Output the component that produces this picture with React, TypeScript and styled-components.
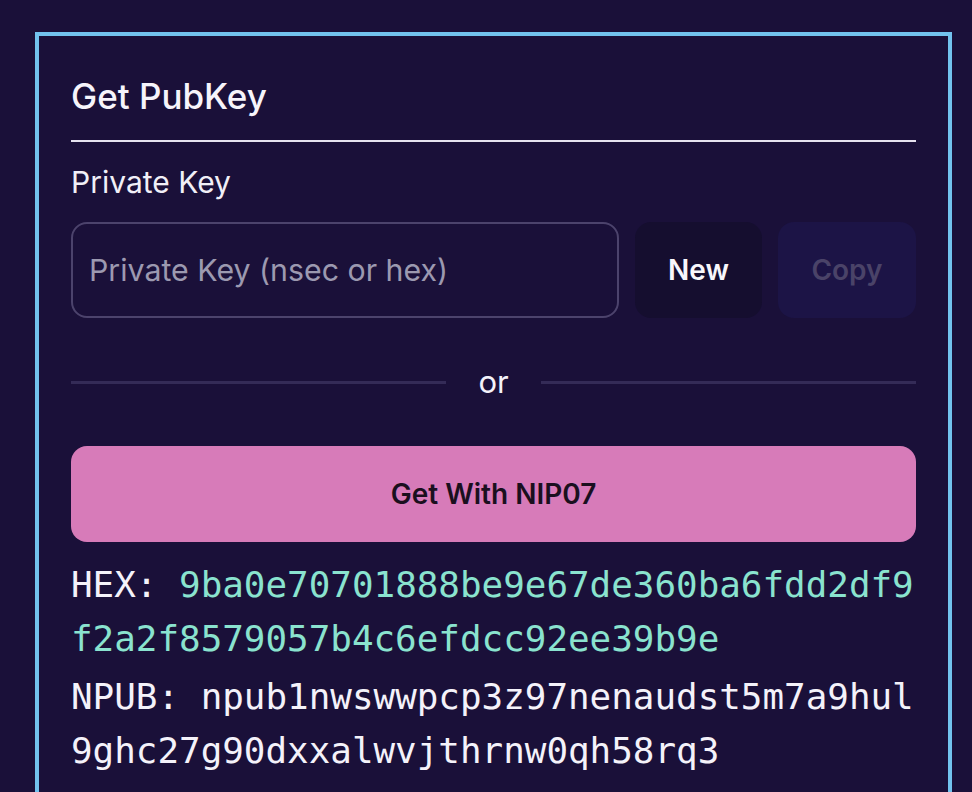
import React from "react";
import styled, { createGlobalStyle } from "styled-components";

const GlobalStyle = createGlobalStyle`
  html, body {
    margin: 0;
    padding: 0;
    background: #1a1039;
    font-family: Inter, "Noto Sans", sans-serif;
    color: #f4f2fa;
  }
  * { box-sizing: border-box; }
`;

const Page = styled.div`
  min-height: 792px;
  padding: 32px 20px 0 35px;
`;

const Card = styled.section`
  width: 917px;
  border: 4px solid #72c2ee;
  border-bottom: none;
  padding: 32px 32px 40px;
  display: flex;
  flex-direction: column;
`;

const Title = styled.h2`
  margin: 0;
  font-size: 35px;
  line-height: 56px;
  font-weight: 500;
  color: #f6f4fb;
`;

const Rule = styled.hr`
  margin: 16px 0 0;
  border: none;
  height: 2px;
  background: #e6e2ef;
`;

const Label = styled.label`
  margin-top: 18px;
  font-size: 30px;
  line-height: 45px;
  font-weight: 400;
  color: #f1eff7;
`;

const KeyRow = styled.div`
  margin-top: 17px;
  display: flex;
  gap: 16px;
  height: 96px;
`;

const KeyInput = styled.input`
  width: 548px;
  height: 96px;
  border: 2px solid #4c436c;
  border-radius: 16px;
  background: transparent;
  padding: 0 16px;
  font-family: Inter, "Noto Sans", sans-serif;
  font-size: 30.3px;
  color: #f4f2fa;
  outline: none;
  &::placeholder {
    color: #9c99b0;
  }
`;

const ActionButton = styled.button<{ $variant: "new" | "copy" }>`
  height: 96px;
  border: none;
  border-radius: 16px;
  font-family: Inter, "Noto Sans", sans-serif;
  font-size: 28px;
  font-weight: 600;
  width: ${(p) => (p.$variant === "new" ? "127px" : "138px")};
  background: ${(p) => (p.$variant === "new" ? "#150e2f" : "#1c1446")};
  color: ${(p) => (p.$variant === "new" ? "#f8f7fc" : "#4a4368")};
`;

const OrRow = styled.div`
  margin-top: 40px;
  height: 48px;
  display: flex;
  align-items: center;
  gap: 32px;
`;

const OrLine = styled.div`
  flex: 1;
  height: 3px;
  background: #342b57;
`;

const OrText = styled.span`
  font-size: 31px;
  line-height: 48px;
  color: #f4f2fa;
`;

const NipButton = styled.button`
  margin-top: 40px;
  height: 96px;
  width: 100%;
  border: none;
  border-radius: 16px;
  background: #d77bb9;
  color: #1a0f1e;
  font-family: Inter, "Noto Sans", sans-serif;
  font-size: 28px;
  font-weight: 600;
`;

const KeyBlock = styled.div<{ $first?: boolean }>`
  margin-top: ${(p) => (p.$first ? "16px" : "4px")};
  font-family: "DejaVu Sans Mono", "Liberation Mono", monospace;
  font-size: 35.9px;
  line-height: 54px;
  word-break: break-all;
  color: #f4f2fa;
`;

const Value = styled.span<{ $accent?: boolean }>`
  color: ${(p) => (p.$accent ? "#8ae3cf" : "#f4f2fa")};
`;

export default function App() {
  return (
    <>
      <GlobalStyle />
      <Page>
        <Card>
          <Title>Get PubKey</Title>
          <Rule />
          <Label>Private Key</Label>
          <KeyRow>
            <KeyInput placeholder="Private Key (nsec or hex)" />
            <ActionButton $variant="new">New</ActionButton>
            <ActionButton $variant="copy">Copy</ActionButton>
          </KeyRow>
          <OrRow>
            <OrLine />
            <OrText>or</OrText>
            <OrLine />
          </OrRow>
          <NipButton>Get With NIP07</NipButton>
          <KeyBlock $first>
            HEX: <Value $accent>9ba0e70701888be9e67de360ba6fdd2df9f2a2f8579057b4c6efdcc92ee39b9e</Value>
          </KeyBlock>
          <KeyBlock>
            NPUB: <Value>npub1nwswwpcp3z97nenaudst5m7a9hul9ghc27g90dxxalwvjthrnw0qh58rq3</Value>
          </KeyBlock>
        </Card>
      </Page>
    </>
  );
}
